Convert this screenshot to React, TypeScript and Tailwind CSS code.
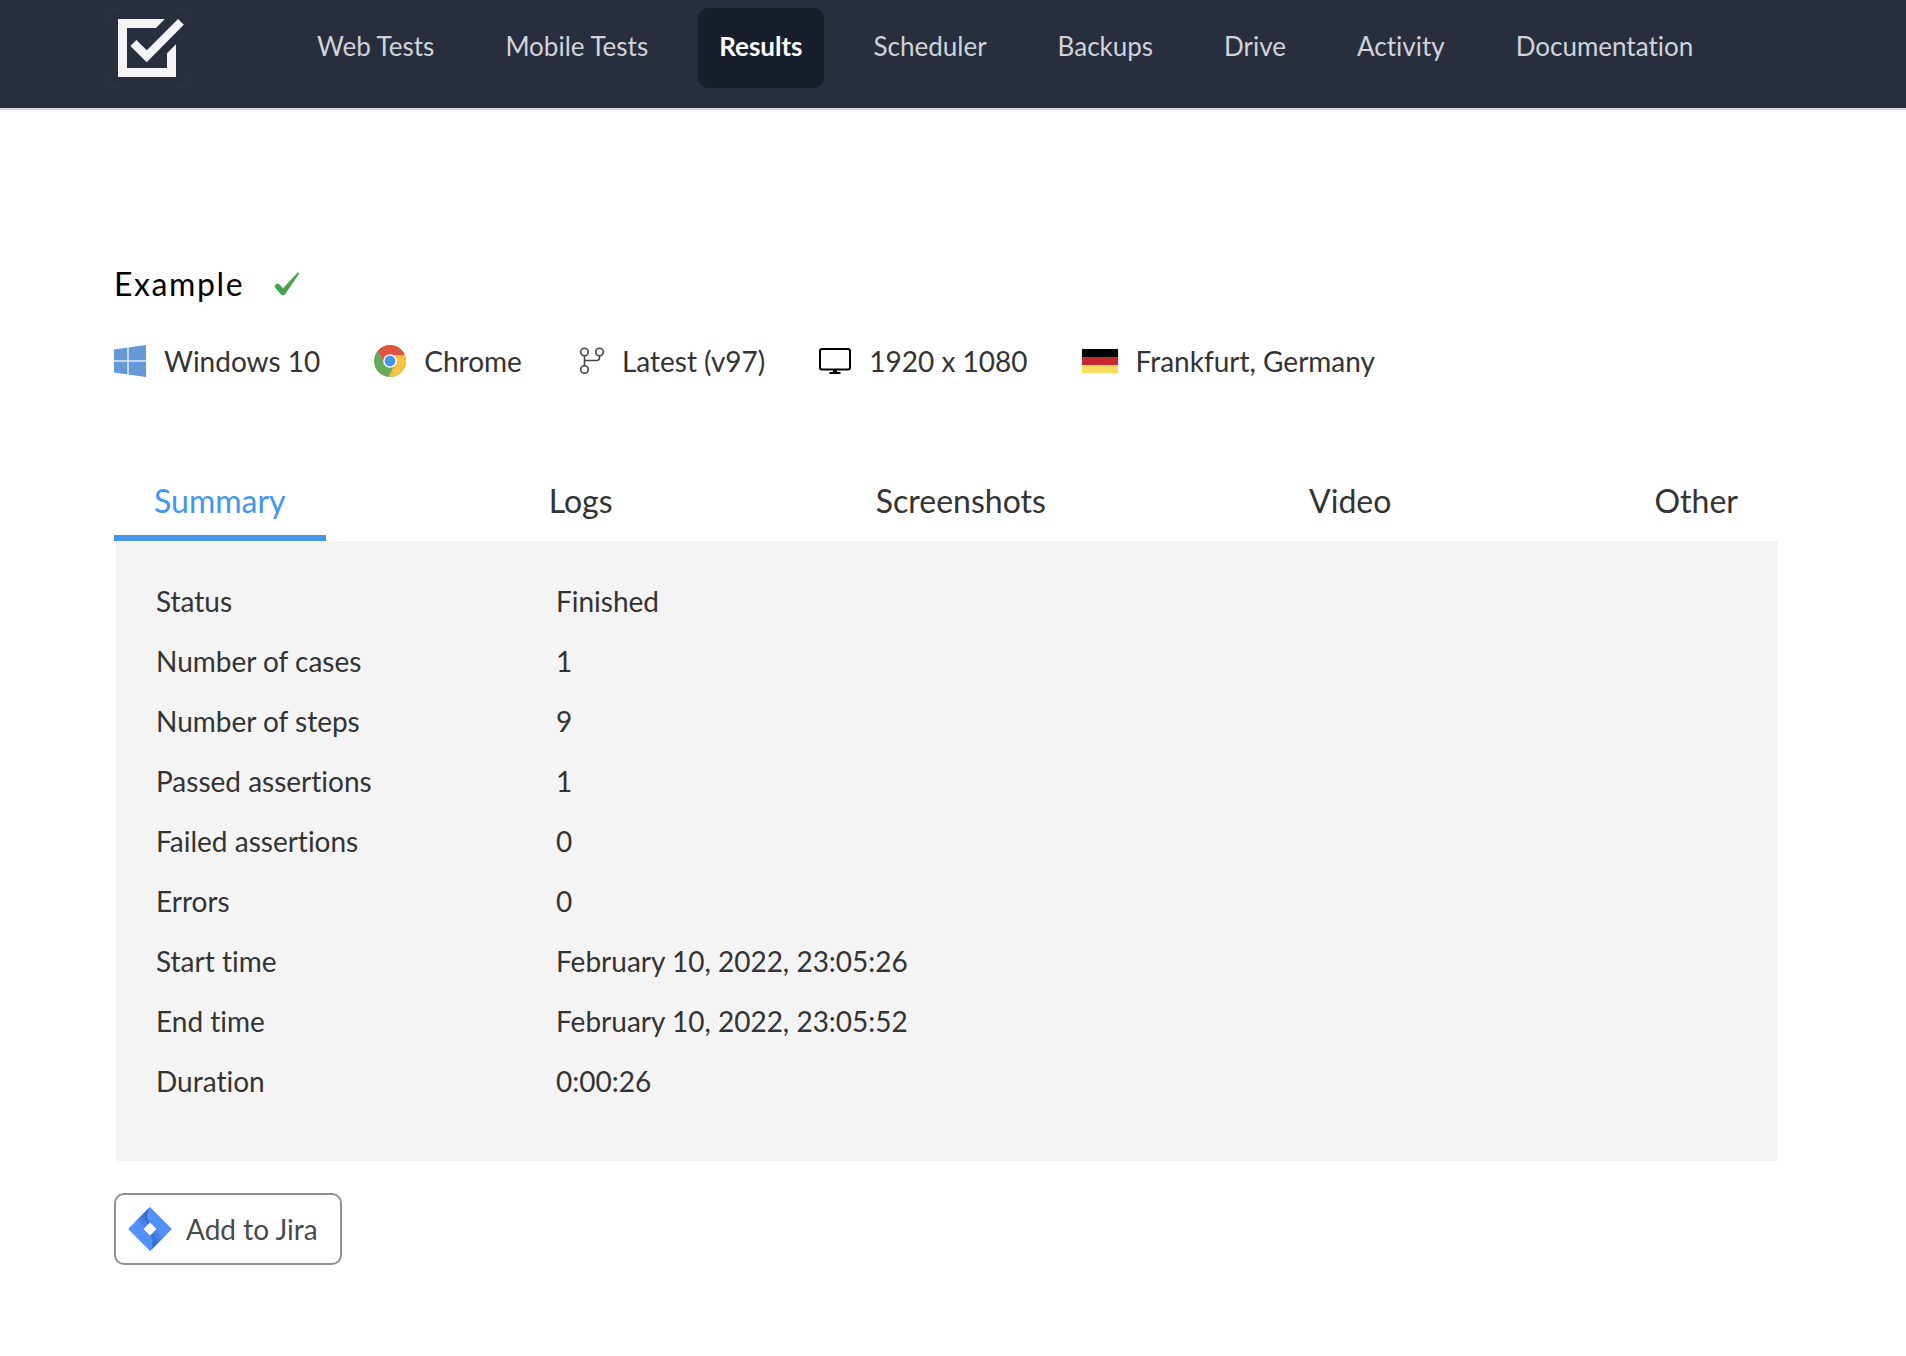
import { useState } from "react";
import clsx from "clsx";

const navItems = ["Web Tests", "Mobile Tests", "Results", "Scheduler", "Backups", "Drive", "Activity", "Documentation"];
const tabs = ["Summary", "Logs", "Screenshots", "Video", "Other"];
const summary = [
    ["Status", "Finished"],
    ["Number of cases", "1"],
    ["Number of steps", "9"],
    ["Passed assertions", "1"],
    ["Failed assertions", "0"],
    ["Errors", "0"],
    ["Start time", "February 10, 2022, 23:05:26"],
    ["End time", "February 10, 2022, 23:05:52"],
    ["Duration", "0:00:26"],
];

const Logo = () => (
    <svg width="80" height="80" viewBox="0 0 80 80" aria-hidden="true">
        <path d="M0.5 11Q0.5 0.5 11 0.5M69 0.5Q79.5 0.5 79.5 11M79.5 69Q79.5 79.5 69 79.5M11 79.5Q0.5 79.5 0.5 69" fill="none" stroke="#303949" />
        <path d="M11 11H57.8L49 20H20V60H60V45.2L69 36.3V69H11Z" fill="#f4f4f4" />
        <path d="M23.3 38L29.3 32L39.8 42.2L71 11L76.8 16.8L39.7 54.3Z" fill="#f4f4f4" />
    </svg>
)

const CheckMark = () => (
    <svg width="26" height="24" viewBox="0 0 26 24" aria-hidden="true">
        <path d="M1 13.5C2.3 11.4 4.5 11.2 6 13L9 16.3L23 1.2C24.6 0 25.6 0.8 24.7 2.2L11.5 21.8C10.3 23.6 8.2 23.9 6.8 22.3L1.2 15.8C0.7 15 0.7 14.2 1 13.5Z" fill="#48a14f" />
    </svg>
)

const WindowsIcon = () => (
    <svg width="32" height="32" viewBox="0 0 32 32" aria-hidden="true">
        <path d="M0 4.5L32 0V32L0 27.5Z" fill="#6598d7" />
        <path d="M14 2V30M0 16H32" stroke="#dfeafa" strokeWidth="1.5" />
    </svg>
)

const ChromeIcon = () => (
    <svg width="32" height="32" viewBox="0 0 32 32" aria-hidden="true">
        <circle cx="16" cy="16" r="16" fill="#67ac5b" />
        <path d="M16 10H30.8A16 16 0 0 1 14.5 31.9L21.2 19Z" fill="#f8c146" />
        <path d="M3.7 6A16 16 0 0 1 30.8 10H16A6 6 0 0 0 10 16Z" fill="#e25241" />
        <circle cx="16" cy="16" r="6.8" fill="#fff" />
        <circle cx="16" cy="16" r="5.4" fill="#4596ec" />
    </svg>
)

const BranchIcon = () => (
    <svg width="28" height="28" viewBox="-4 0 28 28" fill="none" stroke="#444" strokeWidth="1.6" aria-hidden="true">
        <circle cx="4.5" cy="5" r="3.8" />
        <circle cx="19.5" cy="5" r="3.8" />
        <circle cx="4.5" cy="22.5" r="3.8" />
        <path d="M4.5 9V18.5M19.5 9V10.5Q19.5 13.5 16.5 13.5H4.5" />
    </svg>
)

const MonitorIcon = () => (
    <svg width="32" height="26" viewBox="0 0 32 26" aria-hidden="true">
        <rect x="1" y="1" width="30" height="20.5" rx="2" fill="none" stroke="#000" strokeWidth="2" />
        <path d="M14 22H18V24H21.5V26H10.5V24H14Z" />
    </svg>
)

const GermanFlag = () => (
    <svg width="36" height="24" viewBox="0 0 36 24" aria-hidden="true">
        <path d="M0 0H36V8H0Z" fill="#000" />
        <path d="M0 8H36V16H0Z" fill="#c8292f" />
        <path d="M0 16H36V24H0Z" fill="#f8d95f" />
    </svg>
)

const JiraIcon = () => (
    <svg width="44" height="44" viewBox="0 0 44 44" aria-hidden="true">
        <defs>
            <linearGradient id="jiraTop" x1="20" y1="6" x2="10" y2="16" gradientUnits="userSpaceOnUse">
                <stop offset="0.1" stopColor="#3263c8" />
                <stop offset="1" stopColor="#5390f8" />
            </linearGradient>
            <linearGradient id="jiraBottom" x1="24" y1="38" x2="34" y2="28" gradientUnits="userSpaceOnUse">
                <stop offset="0.1" stopColor="#3263c8" />
                <stop offset="1" stopColor="#5390f8" />
            </linearGradient>
        </defs>
        <path d="M22 0L43.2 21.2Q44 22 43.2 22.8L22 44L0.8 22.8Q0 22 0.8 21.2Z" fill="#5390f8" />
        <path d="M22 0C18.2 4.5 18.2 11 22 15.6L15.6 22L6.5 15.5Z" fill="url(#jiraTop)" />
        <path d="M22 44C25.8 39.5 25.8 33 22 28.4L28.4 22L37.5 28.5Z" fill="url(#jiraBottom)" />
        <path d="M22 15.5L28.5 22L22 28.5L15.5 22Z" fill="#fff" />
    </svg>
)

const specs = [
    { icon: <WindowsIcon />, label: "Windows 10" },
    { icon: <ChromeIcon />, label: "Chrome" },
    { icon: <BranchIcon />, label: "Latest (v97)" },
    { icon: <MonitorIcon />, label: "1920 x 1080" },
    { icon: <GermanFlag />, label: "Frankfurt, Germany" },
];

const Header = () => (
    <header className="flex items-start gap-[109px] border-b-2 border-[#d9d4d8] bg-[#282e3e] pt-2 pb-5 pl-[107px]">
        <a href="#" aria-label="Home" className="shrink-0"><Logo /></a>
        <nav className="flex gap-[29px]">
            {navItems.map((item) => (
                <a
                    key={item}
                    href="#"
                    className={clsx(
                        "flex h-20 items-center rounded-[10px] px-[21px] pb-1 text-[26px] whitespace-nowrap",
                        item === "Results" ? "bg-[#191e2d] font-bold text-white" : "text-[#d0d3d8]"
                    )}
                >
                    {item}
                </a>
            ))}
        </nav>
    </header>
)

const App = () => {
    const [activeTab, setActiveTab] = useState<string>("Summary");

    return (
        <div className="bg-white font-['Lato',sans-serif] text-[#333] [font-variant-ligatures:none]">
            <Header />
            <main className="pt-[150px] pr-32 pb-20 pl-[114px]">
                <div className="flex items-center gap-[30px]">
                    <h1 className="text-[32px] leading-12 tracking-wider text-black">Example</h1>
                    <CheckMark />
                </div>
                <ul className="mt-[29px] flex items-center gap-[54px] text-[28px] leading-12">
                    {specs.map((spec) => (
                        <li key={spec.label} className="flex items-center gap-[18px] whitespace-nowrap">
                            {spec.icon}
                            {spec.label}
                        </li>
                    ))}
                </ul>

                <div role="tablist" className="mt-[78px] flex justify-between">
                    {tabs.map((tab) => (
                        <button
                            key={tab}
                            type="button"
                            role="tab"
                            aria-selected={tab === activeTab}
                            onClick={() => setActiveTab(tab)}
                            className={clsx(
                                "cursor-pointer border-b-6 px-10 pt-2 pb-1 text-[32px] leading-[60px]",
                                tab === activeTab ? "border-[#4296eb] text-[#4296eb]" : "border-transparent"
                            )}
                        >
                            {tab}
                        </button>
                    ))}
                </div>
                <div role="tabpanel" className="ml-0.5 bg-[#f4f4f4] px-10 pt-[30px] pb-[50px]">
                    <table className="w-full text-left text-[28px] leading-[60px]">
                        <tbody>
                            {summary.map(([label, value]) => (
                                <tr key={label}>
                                    <th scope="row" className="w-[400px] p-0 font-normal">{label}</th>
                                    <td className="p-0">{value}</td>
                                </tr>
                            ))}
                        </tbody>
                    </table>
                </div>

                <button type="button" className="mt-8 flex h-[72px] cursor-pointer items-center gap-3.5 rounded-[10px] border-2 border-[#909090] pr-[22px] pl-3 text-[28px] text-[#4a4a4a]">
                    <JiraIcon />
                    Add to Jira
                </button>
            </main>
        </div>
    )
}

export default App;
